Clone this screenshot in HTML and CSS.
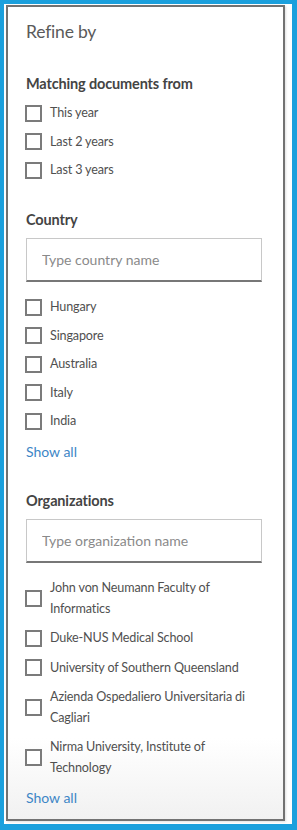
FILE: index.html
```html
<!DOCTYPE html>
<html lang="en">
<head>
<meta charset="utf-8">
<title>Refine by</title>
<link rel="stylesheet" href="styles.css">
</head>
<body>
<div class="frame">
  <aside class="panel">
    <h2 class="title">Refine by</h2>

    <section class="group">
      <h3 class="group-title">Matching documents from</h3>
      <ul class="options">
        <li class="option"><span class="box"></span><span class="label">This year</span></li>
        <li class="option"><span class="box"></span><span class="label">Last 2 years</span></li>
        <li class="option"><span class="box"></span><span class="label">Last 3 years</span></li>
      </ul>
    </section>

    <section class="group">
      <h3 class="group-title">Country</h3>
      <input class="search" type="text" placeholder="Type country name">
      <ul class="options options-after-input">
        <li class="option"><span class="box"></span><span class="label">Hungary</span></li>
        <li class="option"><span class="box"></span><span class="label">Singapore</span></li>
        <li class="option"><span class="box"></span><span class="label">Australia</span></li>
        <li class="option"><span class="box"></span><span class="label">Italy</span></li>
        <li class="option"><span class="box"></span><span class="label">India</span></li>
      </ul>
      <a class="show-all" href="#">Show all</a>
    </section>

    <section class="group">
      <h3 class="group-title">Organizations</h3>
      <input class="search" type="text" placeholder="Type organization name">
      <ul class="options options-after-input options-wide">
        <li class="option"><span class="box"></span><span class="label">John von Neumann Faculty of Informatics</span></li>
        <li class="option"><span class="box"></span><span class="label">Duke-NUS Medical School</span></li>
        <li class="option"><span class="box"></span><span class="label">University of Southern Queensland</span></li>
        <li class="option"><span class="box"></span><span class="label">Azienda Ospedaliero Universitaria di Cagliari</span></li>
        <li class="option"><span class="box"></span><span class="label">Nirma University, Institute of Technology</span></li>
      </ul>
      <a class="show-all" href="#">Show all</a>
    </section>
  </aside>
</div>
</body>
</html>
```

FILE: styles.css
```css
* { box-sizing: border-box; }

html, body {
  margin: 0;
  padding: 0;
}

body {
  background: #1ba0dd;
  padding: 4px 5px 6px 4px;
  font-family: Lato, "Noto Sans", sans-serif;
  color: #505050;
  height: 830px;
}

.frame {
  background: #ffffff;
  padding: 1px 7px 3px 2px;
  height: 820px;
}

.panel {
  border: 2px solid #727272;
  height: 816px;
  padding: 13px 22px 0 17px;
  background: linear-gradient(to bottom, #ffffff 0%, #ffffff 90%, #f1f1f1 100%);
  box-shadow: 1px 1px 2px rgba(0,0,0,0.12);
}

.title {
  margin: 0 0 0 1px;
  font-size: 17.5px;
  letter-spacing: -0.2px;
  line-height: 24px;
  font-weight: 400;
  color: #5a5a5a;
}

.group {
  margin-top: 30px;
}

.group + .group {
  margin-top: 29px;
}

.group-title {
  margin: 0 0 0 1px;
  font-size: 14.5px;
  letter-spacing: -0.15px;
  line-height: 20px;
  font-weight: 700;
  color: #444;
}

.options {
  list-style: none;
  margin: 9px 0 0;
  padding: 0;
  display: flex;
  flex-direction: column;
  gap: 8px;
}

.options-after-input {
  margin-top: 15px;
}

.options-wide {
  gap: 9px;
}

.option {
  display: flex;
  align-items: center;
  gap: 8px;
  font-size: 12.6px;
  letter-spacing: -0.15px;
  line-height: 20.5px;
  color: #505050;
}

.box {
  flex: 0 0 17px;
  width: 17px;
  height: 17px;
  border: 2px solid #7b7b7b;
  background: #fff;
}

.label {
  flex: 1;
}

.search {
  display: block;
  width: 236px;
  height: 44px;
  margin: 8.5px 0 0 1px;
  padding: 0 15px;
  border: 1px solid #c8c8c8;
  border-bottom: 2px solid #777;
  font-family: inherit;
  font-size: 14px;
  color: #505050;
  background: #fff;
  outline: none;
}

.search::placeholder {
  color: #8a8a8a;
}

.show-all {
  display: block;
  margin: 10px 0 0 1px;
  font-size: 14px;
  line-height: 20px;
  color: #3d86c6;
  text-decoration: none;
}
```
